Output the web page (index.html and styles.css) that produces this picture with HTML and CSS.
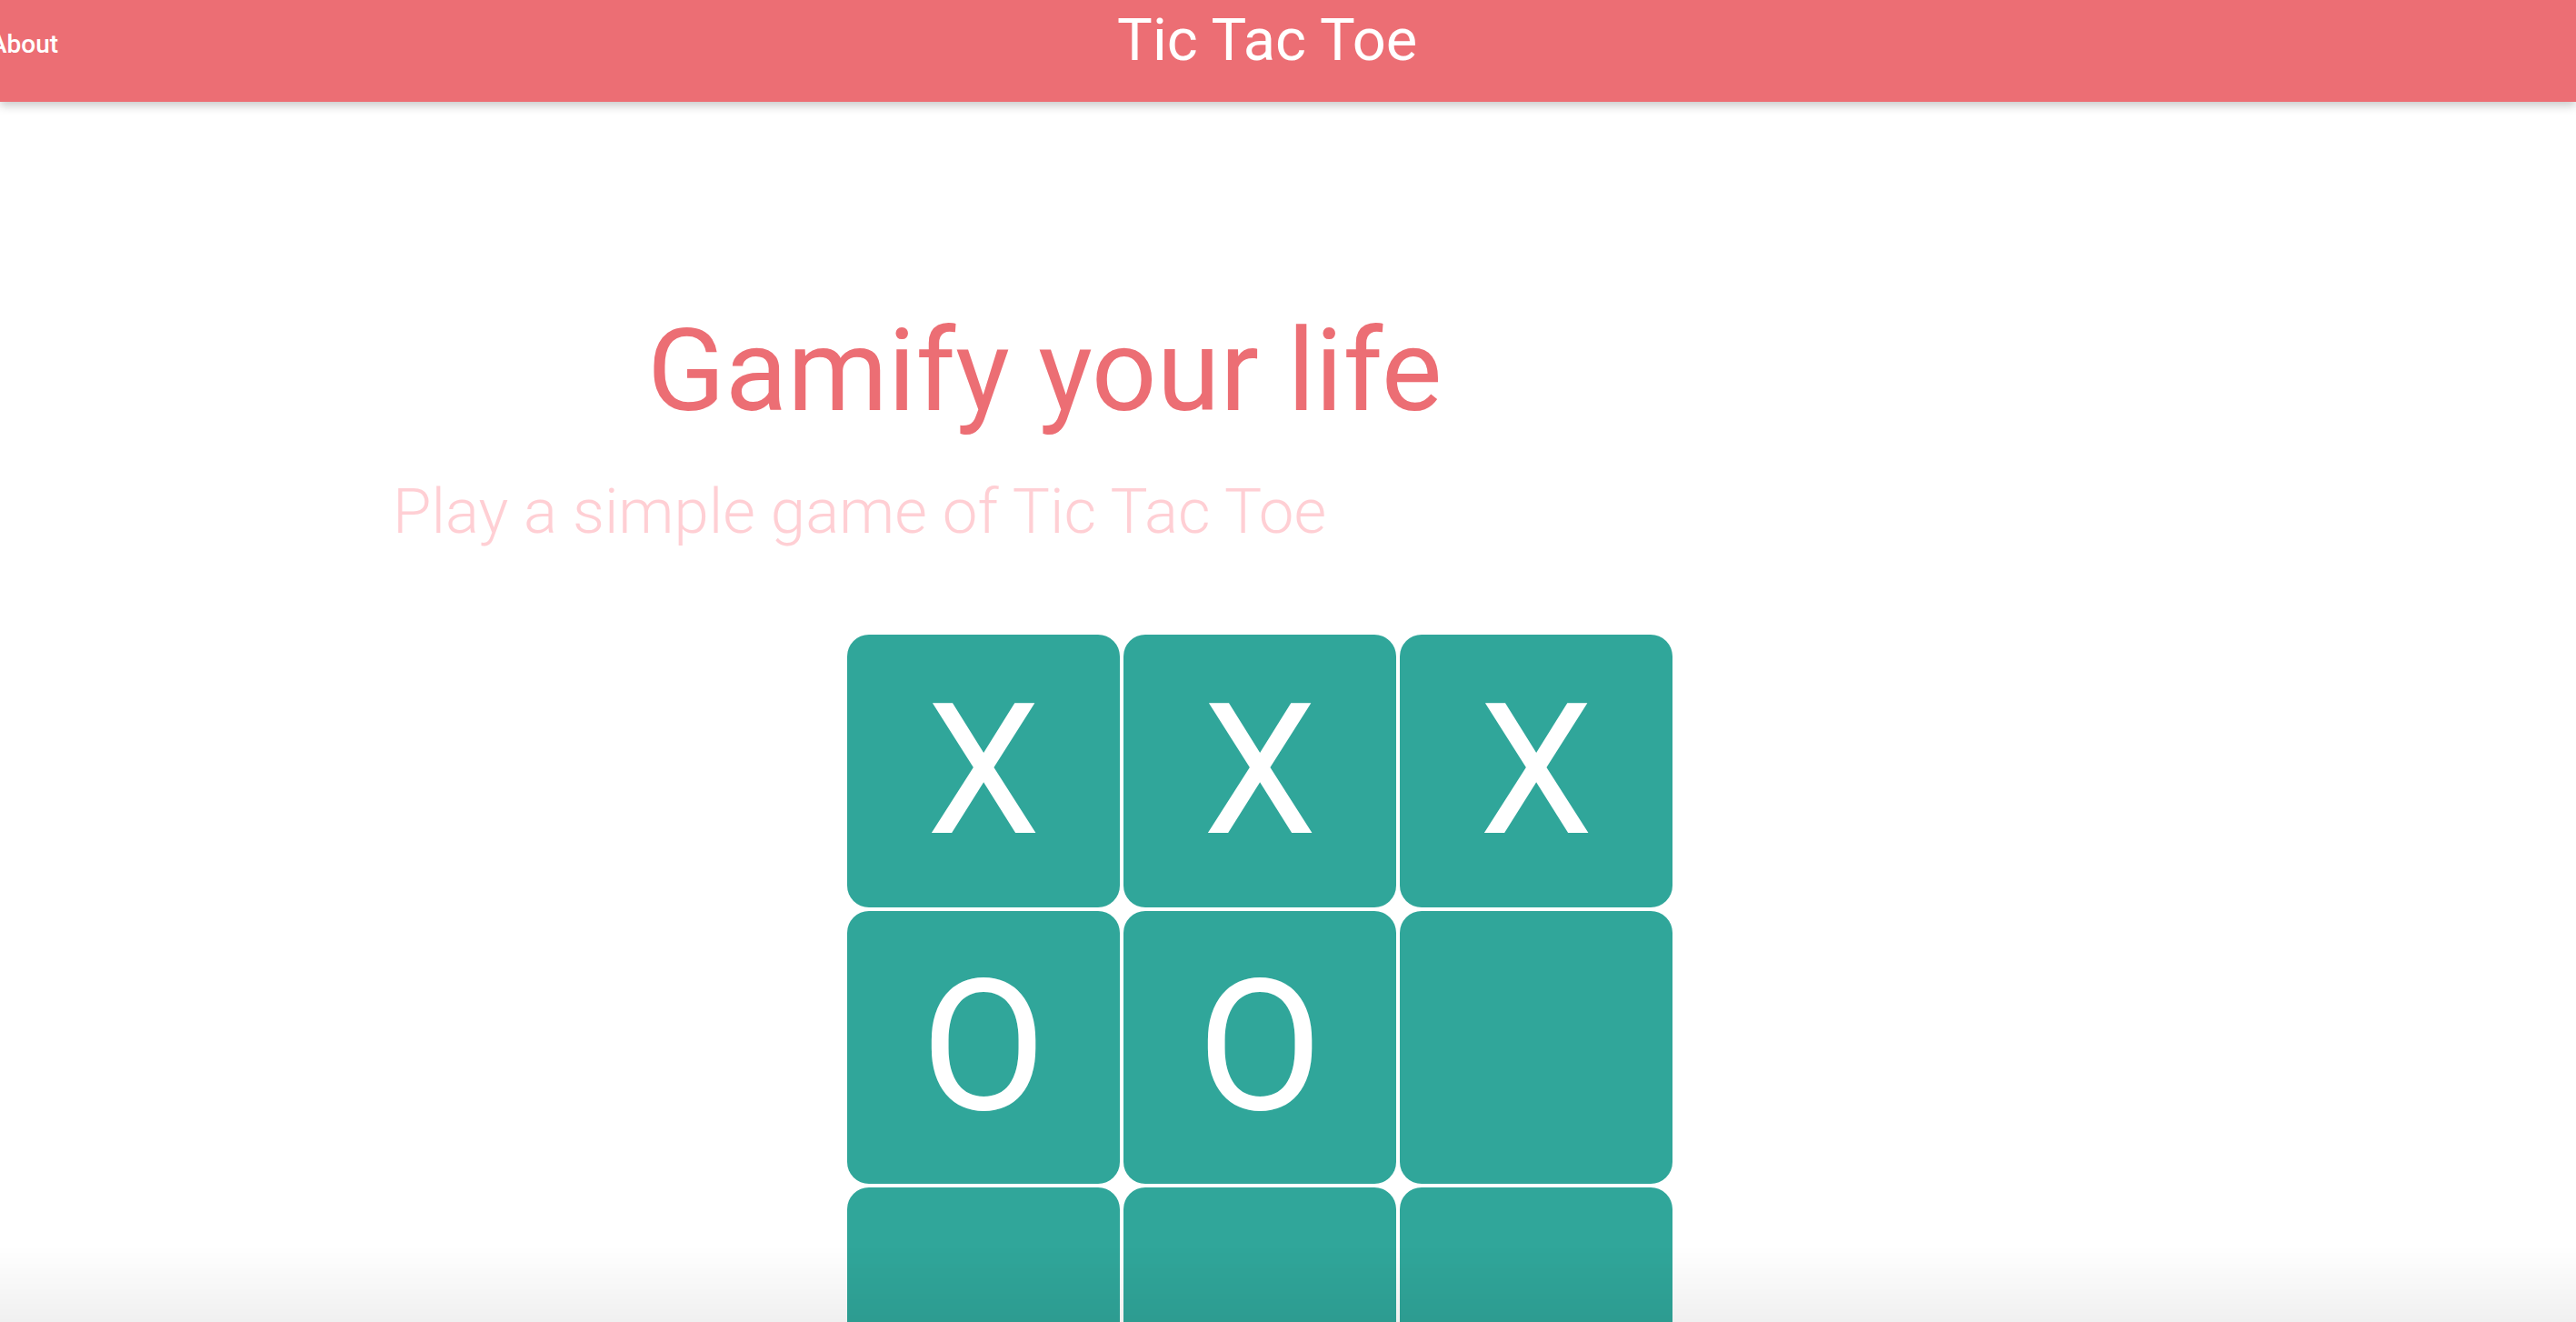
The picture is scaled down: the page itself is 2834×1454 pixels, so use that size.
FILE: index.html
```html
<!DOCTYPE html>
<html lang="en">
<head>
<meta charset="utf-8">
<title>Tic Tac Toe</title>
<link rel="stylesheet" href="styles.css">
</head>
<body>
<header class="topbar">
  <a class="nav-link" href="#">About</a>
  <div class="app-title">Tic Tac Toe</div>
</header>
<main class="content">
  <h1 class="hero-title">Gamify your life</h1>
  <p class="hero-sub">Play a simple game of Tic Tac Toe</p>
  <div class="board">
    <div class="tile">X</div>
    <div class="tile">X</div>
    <div class="tile">X</div>
    <div class="tile">O</div>
    <div class="tile">O</div>
    <div class="tile"></div>
    <div class="tile"></div>
    <div class="tile"></div>
    <div class="tile"></div>
  </div>
</main>
<div class="bottom-fade"></div>
</body>
</html>
```
FILE: styles.css
```css
html, body {
  margin: 0;
  padding: 0;
  background: #ffffff;
  font-family: Roboto, "Liberation Sans", sans-serif;
}

.topbar {
  position: relative;
  z-index: 2;
  height: 112px;
  background: #ec6e74;
  display: flex;
  align-items: flex-start;
  box-shadow: 0 4px 10px rgba(0, 0, 0, 0.22);
}

.nav-link {
  display: block;
  margin-top: 34px;
  margin-left: -11px;
  font-size: 28px;
  line-height: 29px;
  font-weight: 500;
  color: #ffffff;
  text-decoration: none;
}

.app-title {
  margin-top: 12px;
  margin-left: 1165px;
  font-size: 65px;
  line-height: 65px;
  color: #ffffff;
  font-weight: 400;
}

.content {
  padding-top: 233px;
}

.hero-title {
  margin: 0 0 0 712px;
  font-size: 126px;
  line-height: 126px;
  font-weight: 400;
  color: #ec6e74;
}

.hero-sub {
  margin: 57px 0 0 432px;
  font-size: 69px;
  line-height: 69px;
  font-weight: 300;
  color: #ffcfd4;
}

.board {
  margin: 101px 0 0 932px;
  display: grid;
  grid-template-columns: repeat(3, 300px);
  grid-auto-rows: 300px;
  gap: 4px;
  width: 908px;
}

.tile {
  background: #30a69a;
  border-radius: 24px;
  display: flex;
  align-items: center;
  justify-content: center;
  color: #ffffff;
  font-size: 200px;
  line-height: 200px;
  font-weight: 400;
}

.bottom-fade {
  position: fixed;
  left: 0;
  right: 0;
  bottom: 0;
  height: 84px;
  pointer-events: none;
  background: linear-gradient(to bottom, rgba(0, 0, 0, 0), rgba(0, 0, 0, 0.06));
}
```
